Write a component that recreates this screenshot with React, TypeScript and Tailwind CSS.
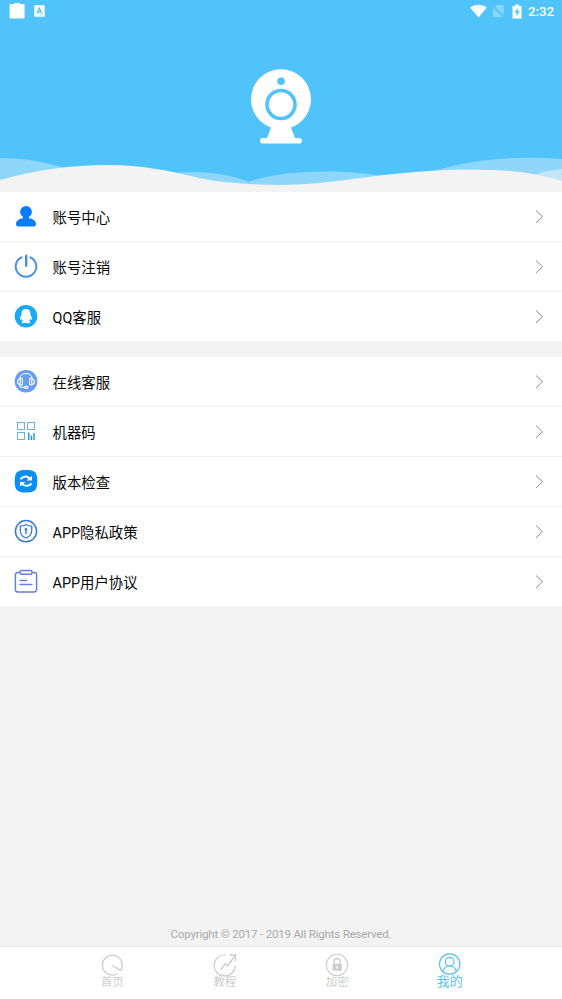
import type { ReactNode } from 'react';

interface MenuItem {
  label: string;
  icon: ReactNode;
}

interface TabItem {
  label: string;
  icon: ReactNode;
  active?: boolean;
}

const accountItems: MenuItem[] = [
  {
    label: '账号中心',
    icon: (
      <g fill="#087df9">
        <circle cx="12" cy="7.8" r="5.900" />
        <path d="M9 11h6v3.200c3.500.500 6.700 2.300 7 5.400 0 2-.6 2.900-2 2.900H4c-1.400 0-2-.9-2-2.900.3-3.100 3.500-4.900 7-5.400z" />
      </g>
    ),
  },
  {
    label: '账号注销',
    icon: (
      <g fill="none" stroke="#4a90e2" strokeWidth="2" strokeLinecap="round">
        <path d="M7.500 3.300A10.300 10.300 0 1 0 16.500 3.300" />
        <path d="M12.200 1.800V11.800" strokeWidth="2.400" />
      </g>
    ),
  },
  {
    label: 'QQ客服',
    icon: (
      <>
        <circle cx="12" cy="12.200" r="11.300" fill="#1ba9f5" />
        <path
          d="M12 5c-3 0-4.400 1.900-4.400 4.600v1.200c-1.100 1.500-1.700 3-1.500 4.700.6.500 1.200-.2 1.600-.8.200.9.600 1.600 1.200 2.300-.9.400-1.400.9-1.200 1.500.6 1 3.400.8 4.300.2.900.6 3.700.8 4.300-.2.200-.6-.3-1.100-1.200-1.500.6-.7 1-1.400 1.200-2.300.4.600 1 1.300 1.600.8.200-1.700-.4-3.200-1.500-4.700V9.600C16.400 6.900 15 5 12 5z"
          fill="#fff"
        />
      </>
    ),
  },
];

const serviceItems: MenuItem[] = [
  {
    label: '在线客服',
    icon: (
      <>
        <circle cx="12" cy="12.200" r="11.300" fill="#669cf6" />
        <g fill="none" stroke="#fff" strokeWidth="1.100" strokeLinecap="round">
          <path d="M5.800 10C5.800 2.700 18.200 2.700 18.200 10" />
          <rect x="6.200" y="9" width="2.200" height="7" rx="1" />
          <rect x="15.600" y="9" width="2.200" height="7" rx="1" />
          <path d="M6 9.700c-3.200.8-3.200 5.200 0 5.800M18 9.700c3.200.8 3.200 5.200 0 5.800M5.500 16.500c.5 1.500 2.500 2 5 2" />
          <rect x="10.700" y="17.400" width="3.300" height="2" rx=".8" />
        </g>
      </>
    ),
  },
  {
    label: '机器码',
    icon: (
      <>
        <g fill="none" stroke="#6ab4e5" strokeWidth="1">
          <rect x="3.500" y="3.500" width="7" height="7" />
          <rect x="13.500" y="3.500" width="7" height="7" />
          <rect x="3.500" y="13.500" width="7" height="7" />
        </g>
        <path d="M14.700 13.500v7.500M17.400 16.500V21M20 14V21" stroke="#2c96dc" strokeWidth="1.500" />
      </>
    ),
  },
  {
    label: '版本检查',
    icon: (
      <>
        <path
          d="M12 .9c8.800 0 11.300 2.500 11.300 11.300S20.800 23.500 12 23.500.7 21 .7 12.200 3.200.9 12 .9z"
          fill="#0a8df7"
        />
        <g fill="none" stroke="#fff" strokeWidth="2">
          <path d="M6.500 10.200c1.700-3 6.500-3.600 9.200-.7M17.500 14.200c-1.700 3-6.500 3.600-9.200.7" />
        </g>
        <path d="M18 6.800v4.700h-5.500zM6 17.600v-4.700h5.500z" fill="#fff" />
      </>
    ),
  },
  {
    label: 'APP隐私政策',
    icon: (
      <g fill="none" stroke="#3c7bd4">
        <circle cx="12" cy="12.200" r="10.600" strokeWidth="1.500" />
        <path
          d="M12 5.500c1.700 1.300 3.600 1.700 5.700 1.700v4.500c0 3.500-2.200 5.900-5.700 7.300-3.500-1.400-5.700-3.800-5.700-7.300V7.200c2.100 0 4-.4 5.700-1.700z"
          strokeWidth="1.300"
        />
        <path d="M12 10.500v4.800" strokeWidth="1.400" />
        <circle cx="12" cy="10.300" r="1.300" fill="#3c7bd4" stroke="none" />
      </g>
    ),
  },
  {
    label: 'APP用户协议',
    icon: (
      <g fill="none" stroke="#667fdd" strokeWidth="1.500">
        <path d="M6 3.500H3.500A2.500 2.500 0 0 0 1.400 6v14.600a2.400 2.400 0 0 0 2.400 2.400h16.400a2.400 2.400 0 0 0 2.400-2.400V6A2.500 2.500 0 0 0 20.500 3.500H18" />
        <rect x="6" y="1.500" width="12" height="3.800" rx="1.500" />
        <path d="M5.500 11.500h7.500M5.500 15.500h13" />
      </g>
    ),
  },
];

const tabs: TabItem[] = [
  {
    label: '首页',
    icon: (
      <path d="M12 12.500l8.700 4.800A9.900 9.900 0 1 0 17.500 20.500" strokeWidth="1.300" />
    ),
  },
  {
    label: '教程',
    icon: (
      <>
        <path d="M12.500 1.800A10.600 10.600 0 1 0 22.300 12.500" strokeWidth="1.200" />
        <path d="M8 16.500l4-5.500 2.800 2L22 2.500M16.500 2H22.500V8" strokeWidth="1.400" />
      </>
    ),
  },
  {
    label: '加密',
    icon: (
      <>
        <circle cx="12" cy="12" r="10.700" strokeWidth="1.100" />
        <path d="M9 11V8.500a3 3 0 0 1 6 0V11" strokeWidth="1.300" />
        <rect x="7.500" y="10.800" width="9.300" height="7" rx=".8" fill="currentColor" stroke="none" />
        <path d="M12.100 13v2.800" stroke="#fff" strokeWidth="1.300" />
      </>
    ),
  },
  {
    label: '我的',
    active: true,
    icon: (
      <>
        <circle cx="11.700" cy="11" r="10.200" strokeWidth="1.200" />
        <circle cx="11.700" cy="8.700" r="4.300" strokeWidth="1.200" />
        <path d="M5 18.700c.7-3.500 3-5.700 6.700-5.700s6 2.200 6.700 5.700" strokeWidth="1.200" />
      </>
    ),
  },
];

function StatusBar() {
  return (
    <div className="flex h-6 items-center pl-[9px] pr-2 text-white">
      <svg className="-mt-[2px]" width="16" height="18" viewBox="0 0 16 18" fill="currentColor">
        <path d="M1.500 2H5L6 1h4l1 1h3.500A1 1 0 0 1 15.600 3v12.500a1 1 0 0 1-1 1h-13a1 1 0 0 1-1-1V3a1 1 0 0 1 .9-1z" />
      </svg>
      <svg className="-mt-[2px] ml-[9px]" width="11" height="12" viewBox="0 0 11 12">
        <rect x=".3" y=".3" width="10.400" height="11.400" rx="1" fill="#fff" />
        <path d="M3 8.500L5.300 3l2.300 5.500M4 6.800h2.800" fill="none" stroke="#50c3f8" strokeWidth="1.200" />
        <path d="M5.500 10h3.500" stroke="#8ed8fb" strokeWidth=".7" />
      </svg>
      <div className="-mt-[2px] ml-auto flex items-center">
        <svg width="17" height="14" viewBox="0 0 17 14" fill="currentColor">
          <path d="M.2 3.500C5-.1 12-.1 16.800 3.500L8.500 13.500z" />
        </svg>
        <svg className="ml-[5px]" width="13" height="14" viewBox="0 0 13 14">
          <path d="M4.500 1H11a.8.8 0 0 1 .8.800V13H1V4.500z" fill="#8ad5fb" />
          <path d="M.5 1.500l12 12" stroke="#50c3f8" strokeWidth="1.800" />
        </svg>
        <svg className="ml-[7px]" width="10" height="15" viewBox="0 0 10 15">
          <path d="M.5 2H3V.5h4V2h2.500v12.500h-9z" fill="#fff" />
          <path d="M5.800 4L2.500 8.500h2v3.700l3.300-4.900h-2z" fill="#50c3f8" />
        </svg>
        <span className="ml-[6px] w-[26px] pt-px whitespace-nowrap text-[13.3px] leading-none font-medium">2:32</span>
      </div>
    </div>
  );
}

function Header() {
  return (
    <header className="flex h-48 shrink-0 flex-col bg-[#50c3fa]">
      <StatusBar />
      <div className="flex justify-center pt-11">
        <svg width="62" height="77" viewBox="0 0 62 77" fill="#fff">
          <circle cx="31" cy="31.200" r="30" />
          <path d="M22 57h18l5 13H49.200a2.800 2.800 0 0 1 0 5.600H12.800a2.800 2.800 0 0 1 0-5.600H17z" />
          <circle cx="31" cy="13.300" r="3.800" fill="#50c3fa" />
          <circle cx="31" cy="36.500" r="14" stroke="#50c3fa" strokeWidth="3.600" />
        </svg>
      </div>
      <svg className="mt-auto block w-full" height="47" viewBox="0 145 562 47">
        <path d="M0 158c24 0 45 4 64 10l20 8v10H0z" fill="#8fd7fa" />
        <path d="M175 173c26-3 54 1 74 9v6h-60z" fill="#8fd7fa" />
        <path d="M248 182c38-13 98-13 140-5v10H248z" fill="#8fd7fa" />
        <path d="M425 174c35-13 83-19 137-15v25H425z" fill="#8fd7fa" />
        <path d="M534 175c7-3 17-5 28-6v15z" fill="#c3e5f6" />
        <path
          d="M0 180C35 170 72 165 107 165c36 0 64 6 92 13 25 5 54 7 81 7 43 0 91-10 135-13 28-2.500 50-2.500 79-2 26 1 47 5 68 11v12H0z"
          fill="#f3f3f3"
        />
      </svg>
    </header>
  );
}

function MenuGroup({ items }: { items: MenuItem[] }) {
  return (
    <div className="bg-white">
      {items.map((item, idx) => (
        <button
          key={item.label}
          className={`flex w-full items-center pl-3.5 pr-[18px] text-left ${
            idx < items.length - 1 ? 'h-[50px] border-b border-[#f1f1f1]' : 'h-[49px]'
          }`}
        >
          <svg className="-mt-px" width="24" height="24" viewBox="0 0 24 24">{item.icon}</svg>
          <span className="ml-[14.5px] pt-1 text-[14.4px] leading-5 text-[#080808]">{item.label}</span>
          <svg className="ml-auto" width="9" height="14" viewBox="0 0 9 14" fill="none" stroke="#8c8c8c">
            <path d="M1 .5L7.500 6.700 1 12.900" />
          </svg>
        </button>
      ))}
    </div>
  );
}

function TabBar() {
  return (
    <nav className="flex h-[53px] shrink-0 border-t border-[#e9e9e9] bg-white px-14">
      {tabs.map((tab) => (
        <button
          key={tab.label}
          className={`flex flex-1 flex-col items-center pt-[6px] ${tab.active ? 'text-[#58c3f4]' : 'text-[#cdcdcd]'}`}
        >
          <svg width="24" height="24" viewBox="0 0 24 24" fill="none" stroke="currentColor">
            {tab.icon}
          </svg>
          <span className={`-mt-[3px] leading-4 ${tab.active ? 'text-[13px]' : 'text-[11.5px]'}`}>{tab.label}</span>
        </button>
      ))}
    </nav>
  );
}

export default function App() {
  return (
    <div className="flex h-screen flex-col bg-[#f3f3f3] font-[Roboto,'Noto_Sans_CJK_SC',sans-serif]">
      <Header />
      <main className="flex flex-1 flex-col">
        <MenuGroup items={accountItems} />
        <div className="mt-4">
          <MenuGroup items={serviceItems} />
        </div>
        <p className="mt-auto pb-1 text-center text-[11.5px] leading-4 tracking-[-0.18px] text-[#a9a9a9]">
          Copyright © 2017 - 2019 All Rights Reserved.
        </p>
      </main>
      <TabBar />
    </div>
  );
}
